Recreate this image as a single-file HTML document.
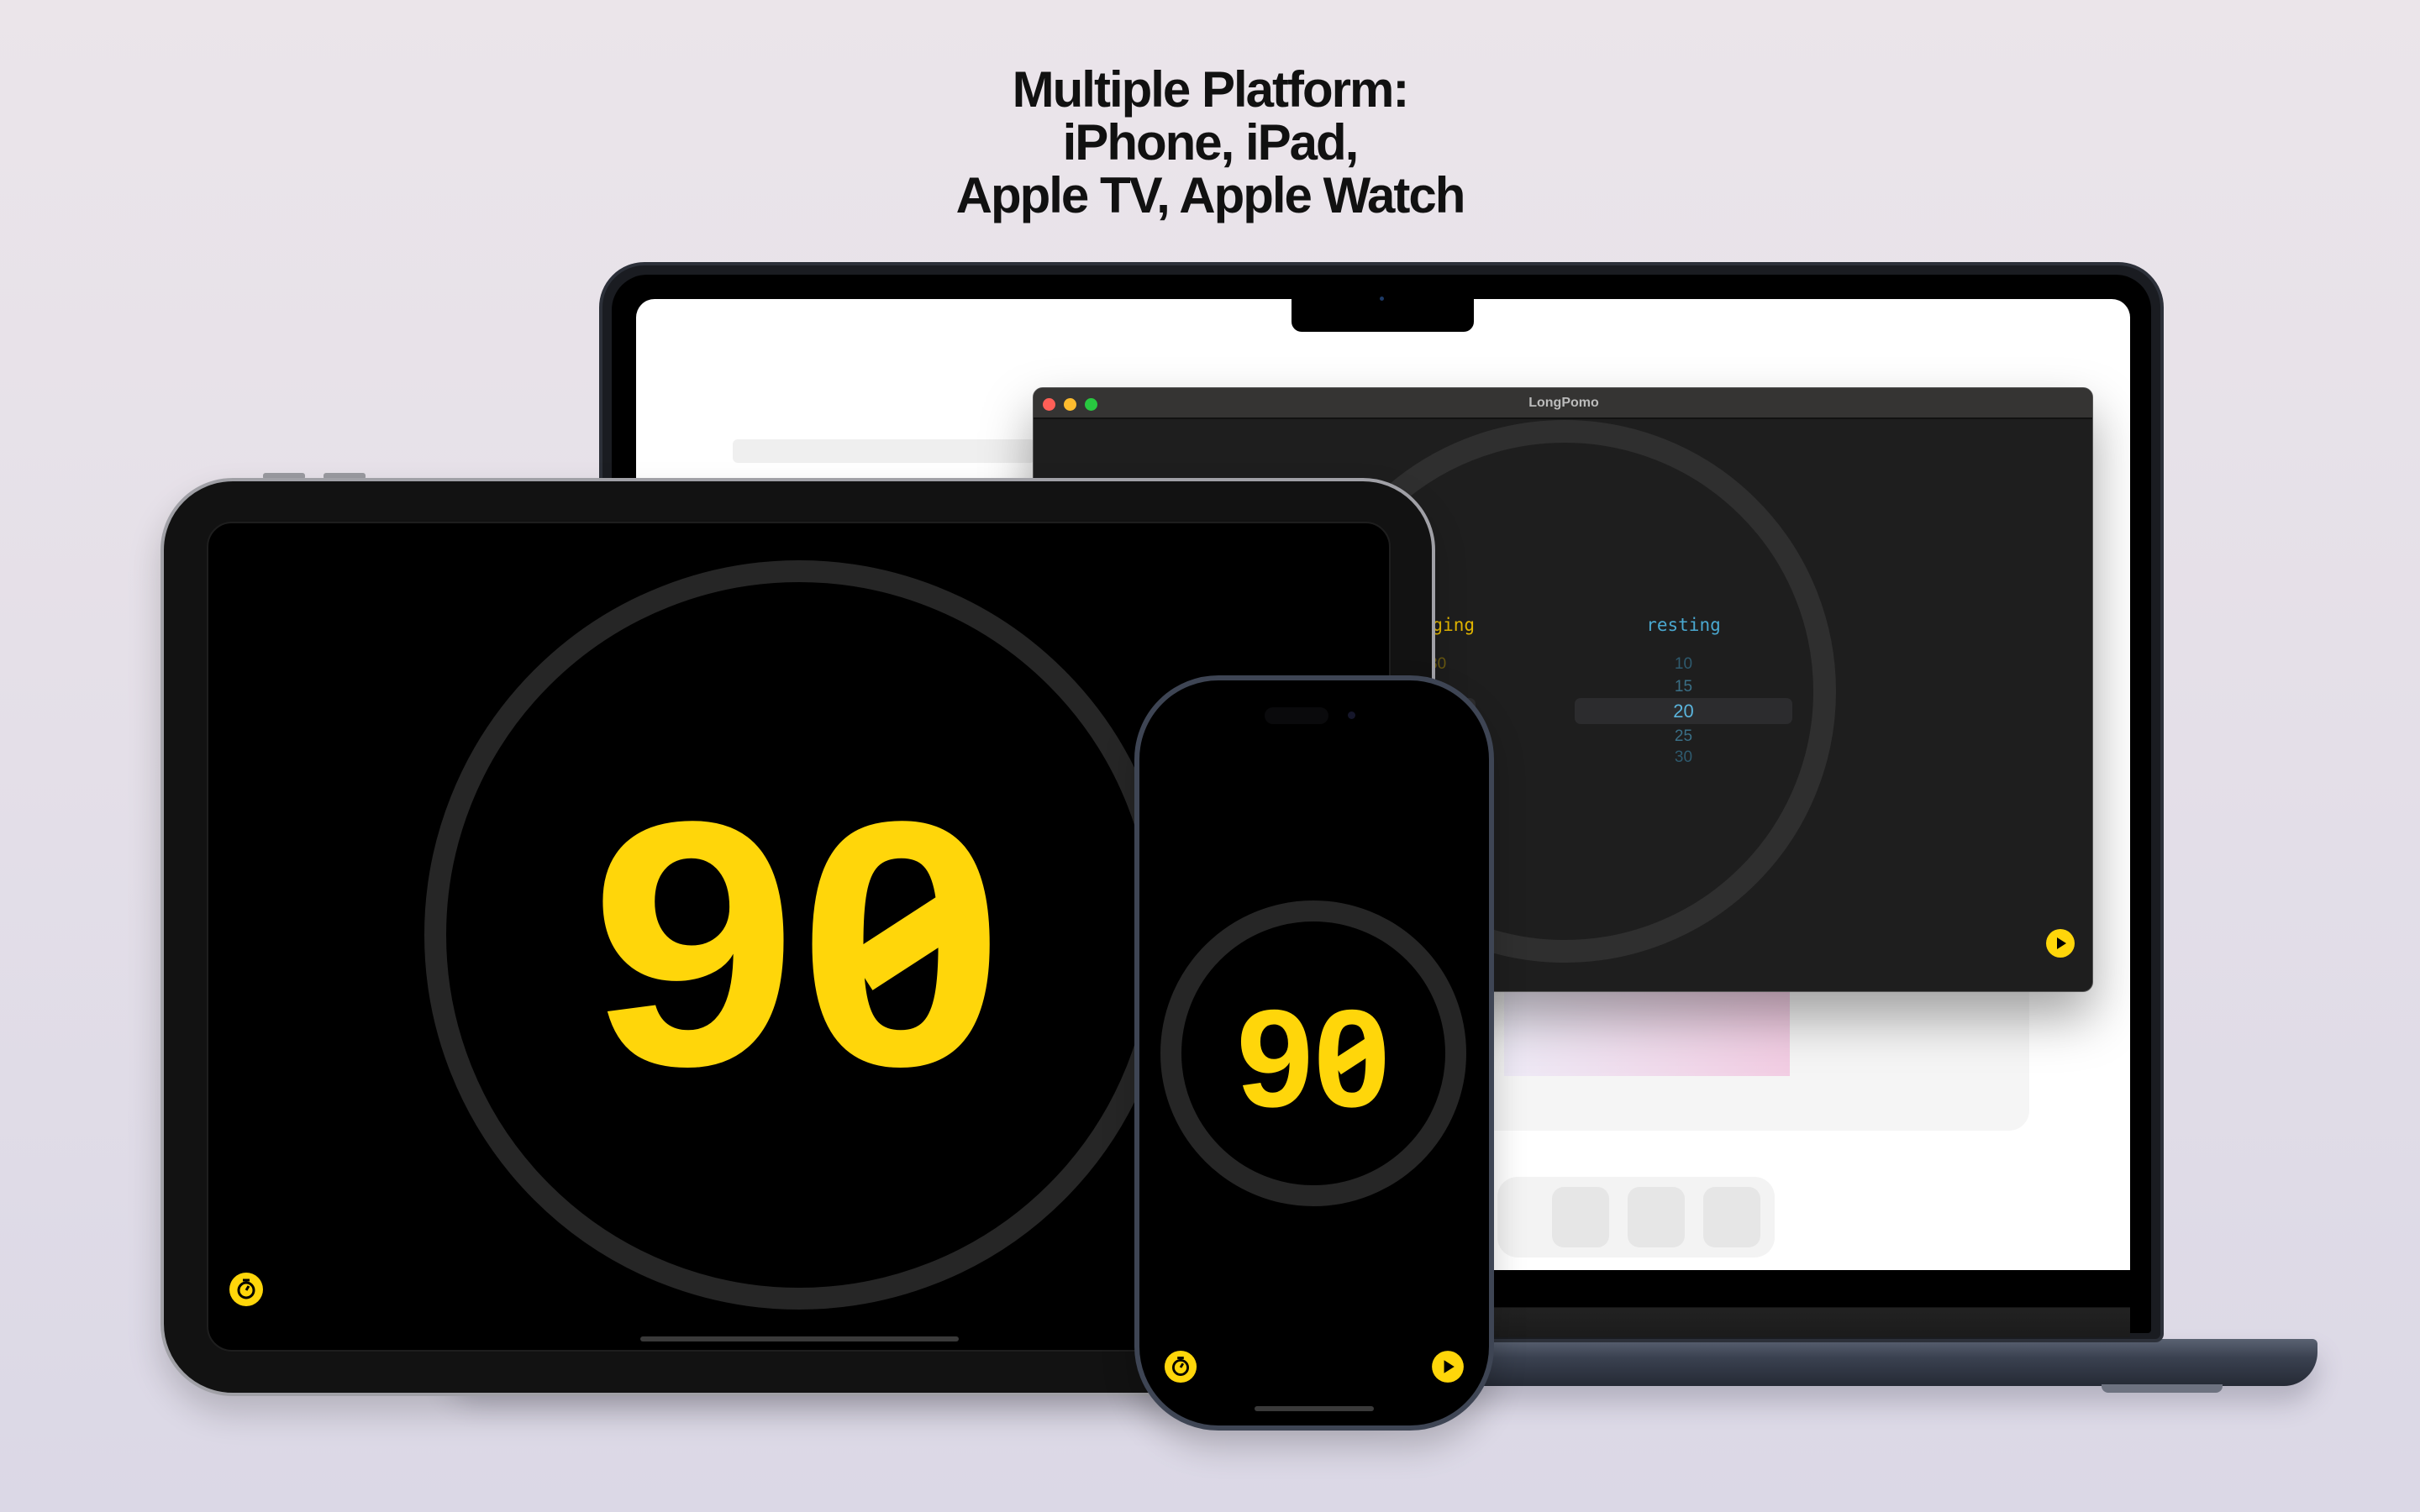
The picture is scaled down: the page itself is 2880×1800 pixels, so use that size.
<!DOCTYPE html>
<html><head><meta charset="utf-8"><style>
*{margin:0;padding:0;box-sizing:border-box}
body{width:2880px;height:1800px;overflow:hidden;position:relative;background:linear-gradient(180deg,#ebe5ea 0%,#e4dfe8 50%,#dbd8e6 100%);font-family:"Liberation Sans",sans-serif}
.abs{position:absolute}
.title{left:0;width:2880px;top:75px;text-align:center;font-weight:bold;font-size:60px;line-height:63px;color:#111;letter-spacing:-2px}
.mono{font-family:"DejaVu Sans Mono","Liberation Mono",monospace}
.num{font-family:"Liberation Sans",sans-serif;font-weight:bold;color:#ffd60a;text-align:center;white-space:nowrap}
</style></head><body>
<div class="abs title">Multiple Platform:<br>iPhone, iPad,<br>Apple TV, Apple Watch</div>

<div class="abs" style="left:530px;top:1594px;width:2228px;height:56px;border-radius:6px 6px 40px 40px;background:linear-gradient(180deg,#5a6272 0%,#3a4150 40%,#252a35 100%);box-shadow:0 20px 30px rgba(60,60,80,.25)"></div>
<div class="abs" style="left:2501px;top:1648px;width:144px;height:10px;border-radius:0 0 8px 8px;background:#6d7280"></div>
<div class="abs" style="left:713px;top:312px;width:1862px;height:1286px;border-radius:54px 54px 10px 10px;background:#1a1c21;border:4px solid #2c3039"></div>
<div class="abs" style="left:728px;top:327px;width:1832px;height:1260px;border-radius:42px 42px 4px 4px;background:#000"></div>
<div class="abs" style="left:757px;top:356px;width:1778px;height:1156px;border-radius:22px 22px 0 0;background:#fff;overflow:hidden">
  <div class="abs" style="left:115px;top:167px;width:360px;height:28px;background:#efefef;border-radius:6px"></div>
  <div class="abs" style="left:1000px;top:825px;width:658px;height:165px;background:#f5f5f5;border-radius:0 0 24px 24px"></div>
  <div class="abs" style="left:1033px;top:825px;width:340px;height:100px;background:linear-gradient(90deg,#eeeaf6,#f2cde3)"></div>
  <div class="abs" style="left:1025px;top:1045px;width:330px;height:96px;background:#f3f3f3;border-radius:24px"></div>
  <div class="abs" style="left:1090px;top:1057px;width:68px;height:72px;background:#e6e6e6;border-radius:14px"></div>
  <div class="abs" style="left:1180px;top:1057px;width:68px;height:72px;background:#e6e6e6;border-radius:14px"></div>
  <div class="abs" style="left:1270px;top:1057px;width:68px;height:72px;background:#e6e6e6;border-radius:14px"></div>
</div>
<div class="abs" style="left:757px;top:1512px;width:1778px;height:80px;background:linear-gradient(180deg,#000 0%,#000 55%,#222 56%,#1b1b1b 100%)"></div>
<div class="abs" style="left:1537px;top:352px;width:217px;height:43px;background:#000;border-radius:0 0 12px 12px"></div>
<div class="abs" style="left:1642px;top:353px;width:5px;height:5px;background:#1d3a66;border-radius:50%"></div>

<div class="abs" style="left:1229px;top:461px;width:1262px;height:720px;background:#1e1e1e;border-radius:12px;border:1px solid #555;box-shadow:0 30px 60px rgba(0,0,0,.35);overflow:hidden">
  <div class="abs" style="left:0;top:0;width:1262px;height:37px;background:#353433;border-bottom:2px solid #111"></div>
  <div class="abs" style="left:11px;top:12px;width:15px;height:15px;border-radius:50%;background:#fe5f57"></div>
  <div class="abs" style="left:36px;top:12px;width:15px;height:15px;border-radius:50%;background:#febc2e"></div>
  <div class="abs" style="left:61px;top:12px;width:15px;height:15px;border-radius:50%;background:#28c840"></div>
  <div class="abs" style="left:0;top:9px;width:1262px;text-align:center;color:#bbb;font-size:16px;font-weight:bold">LongPomo</div>
  <div class="abs" style="left:309px;top:38px;width:646px;height:646px;border-radius:50%;border:27px solid #2f2f2f"></div>
  <div class="abs" style="left:270px;top:369px;width:256px;height:31px;background:#2c2c2e;border-radius:7px"></div>
  <div class="abs" style="left:644px;top:369px;width:259px;height:31px;background:#2c2c2e;border-radius:7px"></div>
  <div class="abs mono" style="left:420px;top:270px;width:105px;text-align:right;color:#e0b400;font-size:21px">ging</div>
  <div class="abs" style="left:470px;top:318px;width:40px;color:#6b5a10;font-size:19px">80</div>
  <div class="abs mono" style="left:644px;top:270px;width:259px;text-align:center;color:#4aa8d0;font-size:21px">resting</div>
  <div class="abs" style="left:644px;top:318px;width:259px;text-align:center;color:#2e5a6e;font-size:19px">10</div>
  <div class="abs" style="left:644px;top:345px;width:259px;text-align:center;color:#3a6f86;font-size:19px">15</div>
  <div class="abs" style="left:644px;top:372px;width:259px;text-align:center;color:#5ab4dc;font-size:22px">20</div>
  <div class="abs" style="left:644px;top:404px;width:259px;text-align:center;color:#3a6f86;font-size:19px">25</div>
  <div class="abs" style="left:644px;top:429px;width:259px;text-align:center;color:#2e5a6e;font-size:19px">30</div>
  <svg class="abs" style="left:1204px;top:643px" width="36" height="36" viewBox="0 0 36 36"><circle cx="18" cy="18" r="17" fill="#ffd60a"/><path d="M14 11 L25 18 L14 25Z" fill="#000"/></svg>
</div>

<div class="abs" style="left:313px;top:563px;width:50px;height:8px;background:#9a9aa0;border-radius:3px"></div>
<div class="abs" style="left:385px;top:563px;width:50px;height:8px;background:#9a9aa0;border-radius:3px"></div>
<div class="abs" style="left:191px;top:569px;width:1517px;height:1093px;border-radius:86px;background:#121212;border:4px solid #a0a0a6;box-shadow:0 20px 40px rgba(0,0,0,.18)"></div>
<div class="abs" style="left:246px;top:621px;width:1409px;height:988px;border-radius:30px;background:#000;border:2px solid #1e1e1e;overflow:hidden">
  <div class="abs" style="left:257px;top:44px;width:892px;height:892px;border-radius:50%;border:26px solid #262626"></div>
  <div class="abs num" style="left:201px;top:293px;width:1000px;font-size:415px;line-height:415px;transform:scaleX(1.07)">90</div>
  <div class="abs" style="left:765px;top:470px;width:140px;height:52px;background:#ffd60a;transform:rotate(-33deg)"></div>
  <svg class="abs" style="left:24px;top:891px" width="42" height="42" viewBox="0 0 42 42"><circle cx="21" cy="21" r="20" fill="#ffd60a"/><circle cx="21" cy="22" r="9" fill="none" stroke="#000" stroke-width="3"/><path d="M21 22 L24 17" stroke="#000" stroke-width="3"/><path d="M17 10h8" stroke="#000" stroke-width="3"/></svg>
  <div class="abs" style="left:514px;top:968px;width:379px;height:6px;background:#3a3a3a;border-radius:3px"></div>
</div>

<div class="abs" style="left:1350px;top:804px;width:428px;height:899px;border-radius:100px;background:#000;border:6px solid #3e4554;box-shadow:0 20px 40px rgba(0,0,0,.2)"></div>
<div class="abs" style="left:1505px;top:842px;width:76px;height:20px;background:#0a0a0c;border-radius:10px"></div>
<div class="abs" style="left:1604px;top:847px;width:9px;height:9px;background:#15162a;border-radius:50%"></div>
<div class="abs" style="left:1381px;top:1072px;width:364px;height:364px;border-radius:50%;border:25px solid #262626"></div>
<div class="abs num" style="left:1363px;top:1178px;width:400px;font-size:165px;line-height:165px">90</div>
<div class="abs" style="left:1586px;top:1246px;width:54px;height:20px;background:#ffd60a;transform:rotate(-33deg)"></div>
<svg class="abs" style="left:1385px;top:1607px" width="40" height="40" viewBox="0 0 42 42"><circle cx="21" cy="21" r="20" fill="#ffd60a"/><circle cx="21" cy="22" r="9" fill="none" stroke="#000" stroke-width="3"/><path d="M21 22 L24 17" stroke="#000" stroke-width="3"/><path d="M17 10h8" stroke="#000" stroke-width="3"/></svg>
<svg class="abs" style="left:1703px;top:1607px" width="40" height="40" viewBox="0 0 36 36"><circle cx="18" cy="18" r="17" fill="#ffd60a"/><path d="M14 11 L25 18 L14 25Z" fill="#000"/></svg>
<div class="abs" style="left:1493px;top:1674px;width:142px;height:6px;background:#3a3a3a;border-radius:3px"></div>
</body></html>
